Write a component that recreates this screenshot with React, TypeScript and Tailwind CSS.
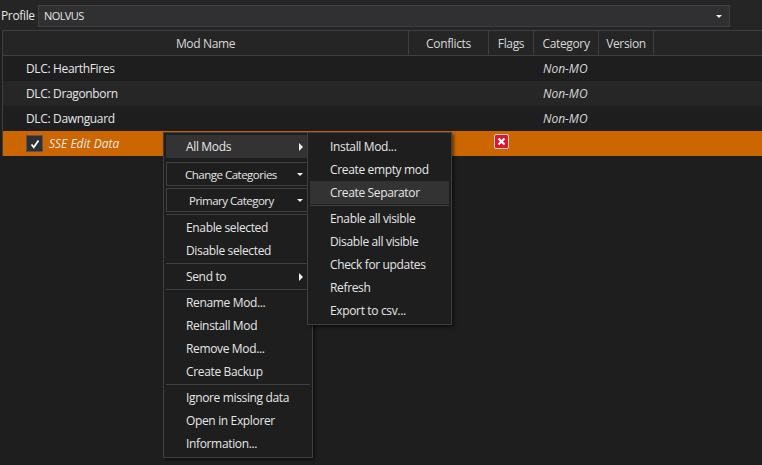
const COLS = "grid grid-cols-[406px_80px_45px_65px_55px_1fr]";

const rows = [
  { name: "DLC: HearthFires", bg: "bg-[#1e1e1f]" },
  { name: "DLC: Dragonborn", bg: "bg-[#262626]" },
  { name: "DLC: Dawnguard", bg: "bg-[#1e1e1f]" },
];

function HeaderCell({ label }: { label: string }) {
  return <div className="flex items-center justify-center border-r border-[#3f3f40] pt-[1px]">{label}</div>;
}

function Arrow() {
  return <span className="h-0 w-0 border-y-[4px] border-l-[4px] border-y-transparent border-l-[#f0f0f0]" />;
}

function Caret() {
  return <span className="h-0 w-0 border-x-[3px] border-t-[3px] border-x-transparent border-t-[#f0f0f0]" />;
}

function Sep() {
  return <div className="my-[1px] h-px bg-[#3f3f40]" />;
}

function Item({ label, hot, arrow }: { label: string; hot?: boolean; arrow?: boolean }) {
  return (
    <div className={`flex h-[23px] items-center justify-between pl-[20px] pr-[7px] pt-[1px] ${hot ? "bg-[#333334]" : ""}`}>
      <span>{label}</span>
      {arrow && <Arrow />}
    </div>
  );
}

function MenuCombo({ label, pad }: { label: string; pad: string }) {
  return (
    <div className={`flex h-[24px] items-center justify-between border border-[#3f3f40] pr-[6px] pt-[1px] text-[11.5px] tracking-[-0.5px] ${pad}`}>
      <span>{label}</span>
      <Caret />
    </div>
  );
}

function FlagIcon() {
  return (
    <svg width="15" height="15" viewBox="0 0 15 15">
      <rect x="0.5" y="0.5" width="14" height="14" rx="1.5" fill="#e0162f" stroke="#d9d3d0" />
      <path d="M4.5 4.5l6 6M10.5 4.5l-6 6" stroke="#fff" strokeWidth="2.2" />
    </svg>
  );
}

export default function App() {
  return (
    <div className="relative h-[465px] w-[762px] overflow-hidden bg-[#1e1e1f] font-['Open_Sans','Noto_Sans',sans-serif] text-[12px] tracking-[-0.35px] text-[#e6e6e6]">
      {/* Profile row */}
      <div className="flex h-[30px] items-center bg-[#252526] pb-[3px] pl-[1px] pr-[32px] pt-[5px]">
        <span className="w-[37px]">Profile</span>
        <div className="flex h-[22px] flex-1 items-center justify-between border border-[#3f3f40] bg-[#303033] pl-[5px] pr-[7px] text-[11px] tracking-[-0.6px]">
          <span>NOLVUS</span>
          <Caret />
        </div>
      </div>

      {/* Mod list */}
      <div className="ml-[2px] border-l border-t border-[#3f3f40]">
        <div className={`${COLS} h-[25px] border-b border-[#3f3f40] bg-[#252526] text-[#d8d8d8]`}>
          <HeaderCell label="Mod Name" />
          <HeaderCell label="Conflicts" />
          <HeaderCell label="Flags" />
          <HeaderCell label="Category" />
          <HeaderCell label="Version" />
          <div />
        </div>
        {rows.map((row) => (
          <div key={row.name} className={`${COLS} h-[25px] items-center pt-[1px] ${row.bg}`}>
            <span className="pl-[23px]">{row.name}</span>
            <span />
            <span />
            <span className="pl-[9px] italic tracking-normal text-[#d8d8d8]">Non-MO</span>
          </div>
        ))}
        <div className={`${COLS} h-[25px] items-center bg-[#cc6600]`}>
          <div className="flex items-center gap-[6px] pl-[23px] italic tracking-normal">
            <span className="flex h-[17px] w-[17px] items-center justify-center border border-[#55555a] bg-[#2f2f33]">
              <svg width="10" height="10" viewBox="0 0 10 10">
                <path d="M1.5 5.5l2.3 2.8L8.5 1.5" fill="none" stroke="#fff" strokeWidth="1.8" />
              </svg>
            </span>
            <span>SSE Edit Data</span>
          </div>
          <span />
          <span className="mb-[4px] flex pl-[5px]">
            <FlagIcon />
          </span>
        </div>
      </div>

      {/* Context menu */}
      <div className="absolute left-[163px] top-[132px] h-[326px] w-[150px] border border-[#3f3f40] bg-[#1e1e1f] p-[2px] shadow-[2px_2px_3px_rgba(0,0,0,0.5)]">
        <Item label="All Mods" hot arrow />
        <div className="mb-[2px] mt-[4px] flex flex-col gap-[2px]">
          <MenuCombo label="Change Categories" pad="pl-[18px]" />
          <MenuCombo label="Primary Category" pad="pl-[22px]" />
        </div>
        <Sep />
        <Item label="Enable selected" />
        <Item label="Disable selected" />
        <Sep />
        <Item label="Send to" arrow />
        <Sep />
        <Item label="Rename Mod..." />
        <Item label="Reinstall Mod" />
        <Item label="Remove Mod..." />
        <Item label="Create Backup" />
        <Sep />
        <Item label="Ignore missing data" />
        <Item label="Open in Explorer" />
        <Item label="Information..." />
      </div>

      {/* Submenu */}
      <div className="absolute left-[307px] top-[132px] h-[193px] w-[145px] border border-[#3f3f40] bg-[#1e1e1f] p-[2px] shadow-[2px_2px_3px_rgba(0,0,0,0.5)]">
        <Item label="Install Mod..." />
        <Item label="Create empty mod" />
        <Item label="Create Separator" hot />
        <Sep />
        <Item label="Enable all visible" />
        <Item label="Disable all visible" />
        <Item label="Check for updates" />
        <Item label="Refresh" />
        <Item label="Export to csv..." />
      </div>
    </div>
  );
}
